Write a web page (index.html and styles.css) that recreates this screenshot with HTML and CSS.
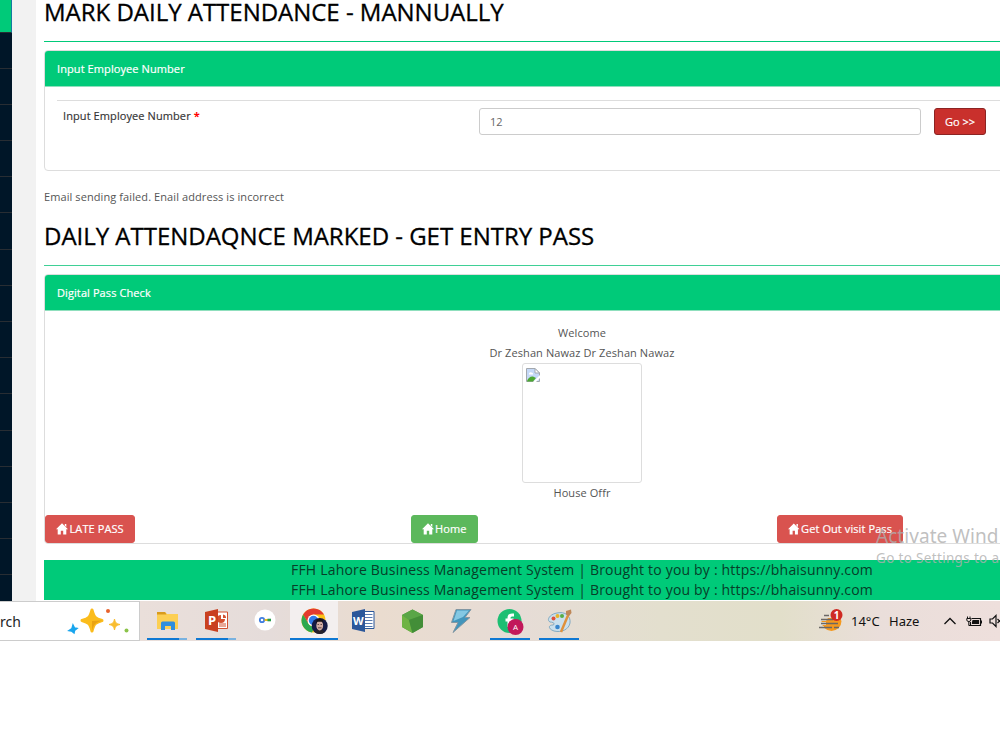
FILE: index.html
```
<!DOCTYPE html>
<html lang="en">
<head>
    <meta charset="utf-8">
    <meta content="width=device-width, initial-scale=1" name="viewport">
    <title>Daily Attendance</title>
    <link rel="stylesheet" href="styles.css">
</head>

<body>
<svg class="defs">
    <symbol id="home" viewBox="0 0 12 12">
        <path d="M6 .3 12 6.3H10.3V11.6H7.2V7.7H4.8V11.6H1.7V6.3H0L6 .3ZM8.8.9H10.3V4L8.8 2.5Z" fill="#fff"/>
    </symbol>
</svg>

<div class="window">
    <ul class="sidebar">
        <li class="active"></li>
        <li></li><li></li><li></li><li></li><li></li><li></li><li></li>
        <li></li><li></li><li></li><li></li><li></li><li></li><li></li><li></li>
    </ul>

    <div class="page">
        <h1>MARK DAILY ATTENDANCE - MANNUALLY</h1>
        <div class="rule"></div>
        <div class="panel panel-input">
            <div class="panel-heading">Input Employee Number</div>
            <div class="panel-body">
                <div class="form-row">
                    <label for="emp">Input Employee Number <b>*</b></label>
                    <input id="emp" type="text" value="12">
                    <button class="btn go">Go &gt;&gt;</button>
                </div>
            </div>
        </div>

        <p class="message">Email sending failed. Enail address is incorrect</p>

        <h1>DAILY ATTENDAQNCE MARKED - GET ENTRY PASS</h1>
        <div class="rule light"></div>
        <div class="panel panel-pass">
            <div class="panel-heading">Digital Pass Check</div>
            <div class="pass">
                <div>Welcome</div>
                <div>Dr Zeshan Nawaz Dr Zeshan Nawaz</div>
                <div class="photo">
                    <svg width="14" height="14" viewBox="0 0 14 14">
                        <path d="M.5.5H9L13.500 5V13.500H.5Z" fill="#c5d9f7" stroke="#a3a8ae"/>
                        <path d="M9 .5V5H13.500Z" fill="#fff" stroke="#a3a8ae"/>
                        <path d="M3 5.500Q4 3.500 5.500 4.500Q7.500 4.500 7 6.500H3Z" fill="#fff"/>
                        <path d="M1 13Q3 8 7 8.500L10 10 7 13.500H1Z" fill="#4ca832"/>
                        <path d="M7 14 14 7V10L10 14Z" fill="#fff"/>
                    </svg>
                </div>
                <div>House Offr</div>
            </div>
            <div class="actions">
                <div><a class="btn danger b-late"><svg><use href="#home"/></svg>LATE PASS</a></div>
                <div><a class="btn success b-home"><svg><use href="#home"/></svg>Home</a></div>
                <div><a class="btn danger b-out"><svg><use href="#home"/></svg>Get Out visit Pass</a></div>
            </div>
        </div>

        <footer>
            <div>FFH Lahore Business Management System | Brought to you by : https://bhaisunny.com</div>
            <div>FFH Lahore Business Management System | Brought to you by : https://bhaisunny.com</div>
        </footer>
    </div>

    <div class="watermark">
        <div class="big">Activate Wind</div>
        <div class="small">Go to Settings to a</div>
    </div>
</div>

<div class="taskbar">
    <div class="search">
        <span>rch</span>
        <svg width="64" height="30" viewBox="0 0 64 30">
            <path d="M26 3C28 10.500 29 11.500 36 13.500C29 15.500 28 16.500 26 24C24 16.500 23 15.500 16 13.500C23 11.500 24 10.500 26 3Z" fill="#fbbc1c" stroke="#fbbc1c" stroke-width="3" stroke-linejoin="round"/>
            <path d="M26 14 36 13.500C29 16 28 17 26 24Z" fill="#e9a312"/>
            <path d="M48.500 12C49.500 16 50 16.500 54 17.500C50 18.500 49.500 19 48.500 23C47.500 19 47 18.500 43 17.500C47 16.500 47.500 16 48.500 12Z" fill="#f9bd2e" stroke="#f9bd2e"/>
            <path d="M7 18 8.500 21 11 21.500 8.500 23.500 8 26 5.500 24 3 23.500 6 21.500Z" fill="#18a5ee" stroke="#18a5ee" stroke-width="1.500"/>
            <circle cx="42" cy="4" r="2" fill="#e8622c"/>
            <circle cx="60.500" cy="23.500" r="2" fill="#8bc34a"/>
        </svg>
    </div>

    <div class="apps">
        <div class="app running more">
            <svg viewBox="0 0 30 30">
                <path d="M5 6H13L15 8H26V23H5Z" fill="#fccf53"/>
                <path d="M5 6H13L14.500 8.500H5Z" fill="#d99b1c"/>
                <path d="M9 24V17Q9 15.500 10.500 15.500H21.500Q23 15.500 23 17V24H19V20H13V24Z" fill="#2e8ede"/>
            </svg>
        </div>
        <div class="app running more">
            <svg viewBox="0 0 30 30">
                <path d="M16 6H26.500V22.500H16Z" fill="#fff" stroke="#d35230"/>
                <path d="M20 9V13H24A4 4 0 1 1 20 9Z" fill="#d35230"/>
                <path d="M22 8.500A3.500 3.500 0 0 1 25 12H22Z" fill="#d35230"/>
                <path d="M18 18H25M18 20H25" stroke="#d35230"/>
                <path d="M4 6 17 3V26L4 23Z" fill="#c9401f"/>
                <text x="7" y="19" class="office">P</text>
            </svg>
        </div>
        <div class="app">
            <svg viewBox="0 0 30 30">
                <circle cx="15" cy="14" r="10.500" fill="#fff"/>
                <circle cx="12" cy="14" r="2.200" fill="none" stroke="#3f7de0" stroke-width="1.800"/>
                <path d="M14.500 14H18" stroke="#e8b821" stroke-width="2"/>
                <path d="M17.500 12.700H21V15.300H17.500Z" fill="#269b4a"/>
            </svg>
        </div>
        <div class="app running current">
            <svg viewBox="0 0 30 30">
                <circle cx="14.500" cy="14.500" r="12" fill="#fbc116"/>
                <path d="M4.100 8.500A12 12 0 0 1 25 8.500H14.500L9.300 17.500Z" fill="#e33b2e"/>
                <path d="M4.100 8.500 9.300 17.500A6 6 0 0 0 16 20.300L13 26.400A12 12 0 0 1 4.100 8.500Z" fill="#2da94f"/>
                <circle cx="14.500" cy="14.500" r="6" fill="#fff"/>
                <circle cx="14.500" cy="14.500" r="4.700" fill="#327be8"/>
                <circle cx="20.700" cy="20" r="8" fill="#151b45"/>
                <path d="M15.500 26 18 23.500H23L26 26A8 8 0 0 1 15.500 26Z" fill="#25222b"/>
                <ellipse cx="20.700" cy="19.500" rx="3.400" ry="5" fill="#d3ada3"/>
                <path d="M17 18.500Q16.500 12.500 20.700 12.500T24.400 18.500L23.500 15.800H18Z" fill="#181318"/>
                <path d="M18.500 18.500H20M21.500 18.500H23M19 21.800H22.500" fill="none" stroke="#4a3535" stroke-width=".8"/>
            </svg>
        </div>
        <div class="app">
            <svg viewBox="0 0 30 30">
                <path d="M16 5.500H26V22.500H16Z" fill="#fff" stroke="#2b579a"/>
                <path d="M17 8.500H24.500M17 11.500H24.500M17 14.500H24.500M17 17.500H24.500M17 20.500H24.500" stroke="#5679af"/>
                <path d="M4 6 17 3V26L4 23Z" fill="#2b579a"/>
                <text x="5" y="18.500" class="office word">W</text>
            </svg>
        </div>
        <div class="app">
            <svg viewBox="0 0 30 30">
                <path d="M15.500 3.500 26 9V21L15.500 27 5 21V9Z" fill="#4f9a3c"/>
                <path d="M5 9 15.500 3.500 26 9 12 14Z" fill="#5aa647"/>
                <path d="M5 9 12 14 15.500 27 5 21Z" fill="#6eb344"/>
                <path d="M26 9 12 14 15.500 27 26 21Z" fill="#438e38"/>
            </svg>
        </div>
        <div class="app">
            <svg viewBox="0 0 30 30">
                <path d="M10 3.500H25L19 11.500H24L7 26.500 12 16.500H5.500Z" fill="#4295bb" stroke="#8297a3"/>
                <path d="M11 4.500H23L17 11 7.500 15Z" fill="#84c8e3"/>
            </svg>
        </div>
        <div class="app running">
            <svg viewBox="0 0 30 30">
                <circle cx="14.500" cy="15" r="12" fill="#1dbf73"/>
                <path d="M19 9H17Q14 9 14 12V21M10.500 14H18.500" fill="none" stroke="#fff" stroke-width="3"/>
                <circle cx="20.500" cy="21" r="8" fill="#c2185b"/>
                <text x="20.500" y="24" class="badge-a">A</text>
            </svg>
        </div>
        <div class="app running">
            <svg viewBox="0 0 30 30">
                <path d="M13 7C21 5 27 10 26 17C25 23 18 27 10 25C4 23 4 19 9 19C12 18 9 16 6 16C2 14 6 8 13 7Z" fill="#cbe0ed" stroke="#82aac2"/>
                <circle cx="9.500" cy="12.500" r="2" fill="#df503c"/>
                <circle cx="13.500" cy="10" r="2" fill="#e7b42b"/>
                <circle cx="18" cy="10" r="2" fill="#57ad45"/>
                <circle cx="13.500" cy="21" r="2.300" fill="#3a86cc"/>
                <path d="M25 7 17 26" stroke="#df913c" stroke-width="2.500"/>
                <path d="M22 5 27 3.500 27.500 7 25 10 22 8.500Z" fill="#bf8858"/>
            </svg>
        </div>
    </div>

    <div class="tray">
        <svg width="26" height="26" viewBox="0 0 26 26">
            <path d="M3.500 13A10 10 0 0 0 23.500 13L22 10H10L8 13Z" fill="#f5991f"/>
            <path d="M2 15.500H8M1 19.500H6" stroke="#e4dfd1" stroke-width="3"/>
            <path d="M6 7.500H11M3 11.500H15M3 15.500H20M1 19.500H14M16 19.500H21" stroke="#6b6865" stroke-width="1.500"/>
            <circle cx="18.500" cy="7" r="6" fill="#cf2a24"/>
            <text x="18.500" y="10.500" class="count">1</text>
        </svg>
        <span class="temp">14°C</span>
        <span class="sky">Haze</span>
        <svg width="14" height="10" viewBox="0 0 14 10"><path d="M1.500 8 7 2.500 12.500 8" fill="none" stroke="#111" stroke-width="1.300"/></svg>
        <svg class="battery" width="17" height="13" viewBox="0 0 17 13">
            <path d="M5.500 3.500H14.500V10.500H4.500V7" fill="none" stroke="#111" stroke-width="1.200"/>
            <path d="M6.500 5H13V9H6V7Z" fill="#111"/>
            <path d="M15.500 5.500V8.500M1.500 1.500V3M4 1.500V3M.8 3.500H4.800V5Q4.800 6.500 2.800 6.500T.8 5ZM2.800 6V10.500H5" fill="none" stroke="#111"/>
        </svg>
        <svg width="15" height="14" viewBox="0 0 15 14"><path d="M1 5H3.500L7 1.500V12.500L3.500 9H1ZM8.500 5 12.500 9M12.500 5 8.500 9" fill="none" stroke="#111" stroke-width="1.200"/></svg>
    </div>
</div>
</body>
</html>
```
FILE: styles.css
```
* {
    box-sizing: border-box;
}

body {
    margin: 0;
    width: 1000px;
    height: 750px;
    overflow: hidden;
    background: #fff;
    color: #555;
    font-family: "Open Sans", sans-serif;
    font-size: 11px;
    line-height: 20px;
    letter-spacing: .09px;
}

.defs {
    display: none;
}

.window {
    position: relative;
    display: flex;
    width: 1000px;
    height: 601px;
    overflow: hidden;
}

.sidebar {
    flex: none;
    width: 12px;
    margin: 0;
    padding: 0;
    list-style: none;
    background: #001628;
}

.sidebar li {
    height: 36.2px;
    border-bottom: 1px solid #282d33;
}

.sidebar .active {
    height: 32.500px;
    background: #00ca79;
    border-right: 1px solid #147ba0;
}

.page {
    flex: none;
    width: 1108px;
    padding-left: 8px;
    border-left: 24px solid #f2f2f2;
}

h1 {
    margin: 0;
    height: 41px;
    color: #000;
    font-size: 24px;
    font-weight: 400;
    line-height: 24px;
    letter-spacing: -.02px;
    white-space: nowrap;
    -webkit-text-stroke: .3px #000;
}

.rule {
    width: 1076px;
    height: 1px;
    margin-bottom: 8px;
    background: #00ca79;
}

.light {
    background: #3fd096;
}

.panel {
    width: 1076px;
    border: 1px solid #ddd;
    border-radius: 4px;
}

.panel-input {
    height: 121px;
}

.panel-heading {
    height: 36px;
    padding: 8px 12px;
    border-bottom: 1px solid #8fdfbd;
    border-radius: 3px 3px 0 0;
    background: #00ca79;
    color: #fff;
    -webkit-text-stroke: .2px #fff;
}

.panel-body {
    padding: 13px 12px 0;
}

.form-row {
    display: flex;
    padding: 7px 6px;
    border-top: 1px solid #ddd;
}

.form-row label {
    width: 416px;
    line-height: 16px;
    color: #333;
    -webkit-text-stroke: .15px #333;
}

.form-row b {
    color: #f00;
    -webkit-text-stroke: 0;
}

.form-row input {
    width: 442px;
    height: 27px;
    margin-right: 13px;
    padding: 0 10px;
    border: 1px solid #ccc;
    border-radius: 3px;
    color: #666;
    font: inherit;
}

.btn {
    display: inline-flex;
    align-items: center;
    height: 28px;
    padding: 0 10px;
    border: 1px solid #d9534f;
    border-radius: 3px;
    color: #fff;
    font: inherit;
    white-space: nowrap;
    -webkit-text-stroke: .2px #fff;
}

.btn svg {
    width: 12px;
    height: 12px;
    margin-right: 1.500px;
}

.go {
    justify-content: center;
    width: 52px;
    height: 27px;
    padding: 0;
    border-color: #8c2423;
    background: #c9302c;
}

.danger {
    background: #d9534f;
}

.success {
    border-color: #5cb85c;
    background: #5cb85c;
}

.message {
    height: 53px;
    margin: 0;
    padding-top: 16px;
}

.panel-pass {
    height: 270px;
}

.pass {
    height: 204px;
    padding-top: 12px;
    text-align: center;
}

.photo {
    display: flex;
    width: 120px;
    height: 120px;
    margin: 0 auto;
    padding: 4px 3px;
    border: 1px solid #ddd;
    border-radius: 3px;
}

.actions {
    display: grid;
    grid-template-columns: 365.500px 366.500px 1fr;
}

.actions > div {
    height: 28px;
}

.b-late {
    width: 90px;
}

.b-home {
    width: 67px;
}

.b-out {
    width: 126px;
}

footer {
    width: 1076px;
    height: 40px;
    margin-top: 16px;
    background: #00ca79;
    color: #073e29;
    font-size: 14px;
    letter-spacing: .19px;
    text-align: center;
}

.watermark {
    position: absolute;
    left: 876px;
    top: 524px;
    color: rgba(175, 175, 175, .8);
    font-family: "Noto Sans", sans-serif;
    white-space: nowrap;
}

.watermark .big {
    font-size: 19px;
    line-height: 24px;
    letter-spacing: .05px;
}

.watermark .small {
    font-size: 13.500px;
    line-height: 20px;
    letter-spacing: .33px;
}

.taskbar {
    display: flex;
    width: 1000px;
    height: 40px;
    overflow: hidden;
    background: linear-gradient(90deg, #eadfda 14%, #e5dcda 27%, #eadccf 38%, #e6dcd6 52%, #e3dfce 66%, #e2dfca 78%, #eadeda 88%, #eedfdc);
    color: #222;
    font-family: "Noto Sans", sans-serif;
    letter-spacing: 0;
}

.search {
    display: flex;
    flex: none;
    align-items: center;
    width: 140px;
    border: 1px solid #ccc;
    border-left: 0;
    background: #fff;
    font-size: 14px;
}

.search span {
    padding-top: 2px;
}

.search svg {
    margin: 2px 0 0 45px;
}

.apps {
    display: flex;
    flex: none;
    width: 678px;
    padding-left: 2.500px;
    gap: 1px;
}

.app {
    flex: none;
    width: 48px;
    height: 39px;
    padding: 5px 9px 0;
}

.app svg {
    display: block;
    width: 30px;
    height: 30px;
}

.running {
    background: linear-gradient(#0e78d3, #0e78d3) center bottom / 40px 2px no-repeat;
}

.more {
    background: linear-gradient(90deg, #0e78d3 32px, #79b2e0 32px) center bottom / 40px 2px no-repeat;
}

.current {
    background: linear-gradient(#0e78d3, #0e78d3) center bottom / 48px 2px no-repeat #f3efef;
}

.office {
    fill: #fff;
    font: bold 13px "Open Sans", sans-serif;
}

.word {
    font-size: 11px;
}

.badge-a,
.count {
    fill: #fff;
    font: 8px "Open Sans", sans-serif;
    text-anchor: middle;
}

.count {
    font-size: 10px;
    font-weight: bold;
}

.tray {
    display: flex;
    flex: none;
    align-items: center;
    color: #111;
    font-size: 13px;
}

.tray svg {
    flex: none;
}

.temp {
    width: 38px;
    margin-left: 7px;
}

.sky {
    width: 54px;
}

.battery {
    margin: 0 6px 0 9px;
}
```
